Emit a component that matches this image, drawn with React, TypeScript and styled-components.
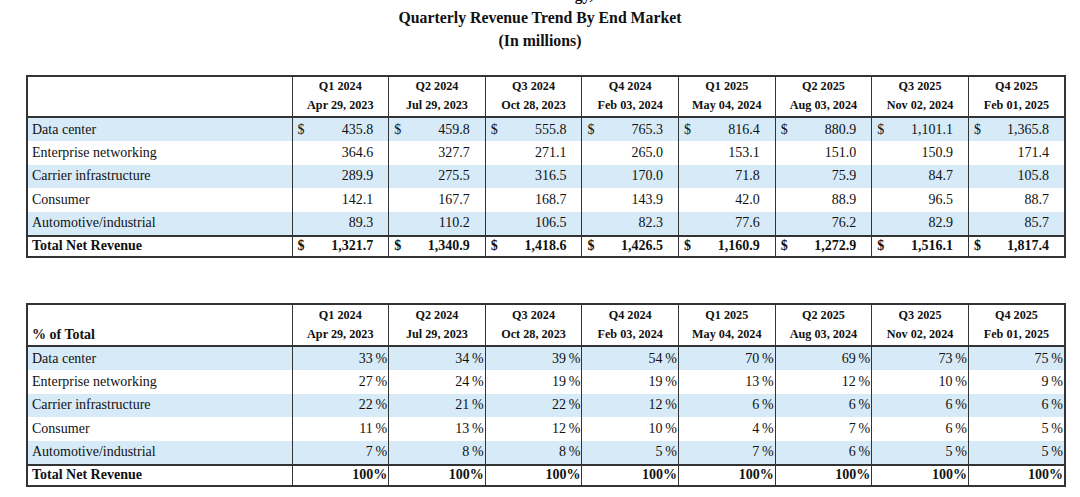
import React from "react";
import styled, { createGlobalStyle } from "styled-components";

const GlobalStyle = createGlobalStyle`
	html, body {
		margin: 0;
		padding: 0;
		background: #ffffff;
	}
	body {
		font-family: "Liberation Serif", "Times New Roman", serif;
		color: #111111;
		overflow: hidden;
	}
`;

const Page = styled.div`
	width: 1080px;
	padding-left: 26px;
	box-sizing: border-box;
`;

const Heading = styled.div`
	margin-top: -17px;
	width: 1080px;
	margin-left: -26px;
	display: flex;
	flex-direction: column;
	align-items: center;
	font-weight: bold;
	font-size: 15.8px;
	line-height: 23px;
`;

const Table = styled.table<{ $gap: number }>`
	margin-top: ${(p) => p.$gap}px;
	width: 1040px;
	border-collapse: collapse;
	table-layout: fixed;
	border: 2px solid #333333;
	font-size: 14px;
`;

const HeadRow = styled.tr`
	border-bottom: 2px solid #333333;
`;

const HeadCell = styled.th<{ $align?: string; $height: number }>`
	font-size: 12.2px;
	font-weight: bold;
	padding: 0 4px 1px 4px;
	height: ${(p) => p.$height}px;
	border-left: 1.5px solid #333333;
	text-align: ${(p) => p.$align || "center"};
	vertical-align: bottom;
	line-height: 19px;
	&:first-child {
		border-left: none;
	}
`;

const HeadLine = styled.div`
	white-space: nowrap;
`;

const LabelHead = styled.span`
	font-size: 14px;
	line-height: 19px;
	display: block;
`;

const Row = styled.tr<{ $shade?: boolean; $total?: boolean }>`
	background: ${(p) => (p.$shade ? "#d6eaf8" : "#ffffff")};
	border-top: ${(p) => (p.$total ? "2px solid #333333" : "none")};
	font-weight: ${(p) => (p.$total ? "bold" : "normal")};
	& > td {
		height: ${(p) => (p.$total ? 19 : 23.4)}px;
	}
`;

const Label = styled.td`
	padding: 0 0 0 4px;
	white-space: nowrap;
	line-height: 18px;
`;

const Value = styled.td<{ $pad: number }>`
	padding: 0 ${(p) => p.$pad}px 0 5px;
	border-left: 1.5px solid #333333;
	white-space: nowrap;
	line-height: 18px;
`;

const ValueInner = styled.div`
	display: flex;
	justify-content: space-between;
`;

const Filler = styled.span``;

const quarters = [
	["Q1 2024", "Apr 29, 2023"],
	["Q2 2024", "Jul 29, 2023"],
	["Q3 2024", "Oct 28, 2023"],
	["Q4 2024", "Feb 03, 2024"],
	["Q1 2025", "May 04, 2024"],
	["Q2 2025", "Aug 03, 2024"],
	["Q3 2025", "Nov 02, 2024"],
	["Q4 2025", "Feb 01, 2025"],
];

const markets = [
	"Data center",
	"Enterprise networking",
	"Carrier infrastructure",
	"Consumer",
	"Automotive/industrial",
];

const revenue = [
	["435.8", "459.8", "555.8", "765.3", "816.4", "880.9", "1,101.1", "1,365.8"],
	["364.6", "327.7", "271.1", "265.0", "153.1", "151.0", "150.9", "171.4"],
	["289.9", "275.5", "316.5", "170.0", "71.8", "75.9", "84.7", "105.8"],
	["142.1", "167.7", "168.7", "143.9", "42.0", "88.9", "96.5", "88.7"],
	["89.3", "110.2", "106.5", "82.3", "77.6", "76.2", "82.9", "85.7"],
];
const revenueTotal = ["1,321.7", "1,340.9", "1,418.6", "1,426.5", "1,160.9", "1,272.9", "1,516.1", "1,817.4"];

const share = [
	["33", "34", "39", "54", "70", "69", "73", "75"],
	["27", "24", "19", "19", "13", "12", "10", "9"],
	["22", "21", "22", "12", "6", "6", "6", "6"],
	["11", "13", "12", "10", "4", "7", "6", "5"],
	["7", "8", "8", "5", "7", "6", "5", "5"],
];

function Cols() {
	return (
		<colgroup>
			<col style={{ width: 265 }} />
			{quarters.map((q) => (
				<col key={q[0]} />
			))}
		</colgroup>
	);
}

function Header({ label, height }: { label?: string; height: number }) {
	return (
		<thead>
			<HeadRow>
				<HeadCell $align="left" $height={height}>
					{label && <LabelHead>{label}</LabelHead>}
				</HeadCell>
				{quarters.map((q) => (
					<HeadCell key={q[0]} $height={height}>
						<HeadLine>{q[0]}</HeadLine>
						<HeadLine>{q[1]}</HeadLine>
					</HeadCell>
				))}
			</HeadRow>
		</thead>
	);
}

function App() {
	return (
		<Page>
			<GlobalStyle />
			<Heading>
				<div>Marvell Technology, Inc.</div>
				<div>Quarterly Revenue Trend By End Market</div>
				<div>(In millions)</div>
			</Heading>

			<Table $gap={23}>
				<Cols />
				<Header height={36} />
				<tbody>
					{markets.map((m, i) => (
						<Row key={m} $shade={i % 2 === 0}>
							<Label>{m}</Label>
							{revenue[i].map((v, j) => (
								<Value key={j} $pad={15}>
									<ValueInner>
										{i === 0 ? <span>$</span> : <Filler />}
										<span>{v}</span>
									</ValueInner>
								</Value>
							))}
						</Row>
					))}
					<Row $total>
						<Label>Total Net Revenue</Label>
						{revenueTotal.map((v, j) => (
							<Value key={j} $pad={15}>
								<ValueInner>
									<span>$</span>
									<span>{v}</span>
								</ValueInner>
							</Value>
						))}
					</Row>
				</tbody>
			</Table>

			<Table $gap={45}>
				<Cols />
				<Header label="% of Total" height={39} />
				<tbody>
					{markets.map((m, i) => (
						<Row key={m} $shade={i % 2 === 0}>
							<Label>{m}</Label>
							{share[i].map((v, j) => (
								<Value key={j} $pad={1}>
									<ValueInner>
										<Filler />
										<span>{v}{"\u2009"}%</span>
									</ValueInner>
								</Value>
							))}
						</Row>
					))}
					<Row $total>
						<Label>Total Net Revenue</Label>
						{quarters.map((q) => (
							<Value key={q[0]} $pad={1}>
								<ValueInner>
									<Filler />
									<span>100%</span>
								</ValueInner>
							</Value>
						))}
					</Row>
				</tbody>
			</Table>
		</Page>
	);
}

export default App;
